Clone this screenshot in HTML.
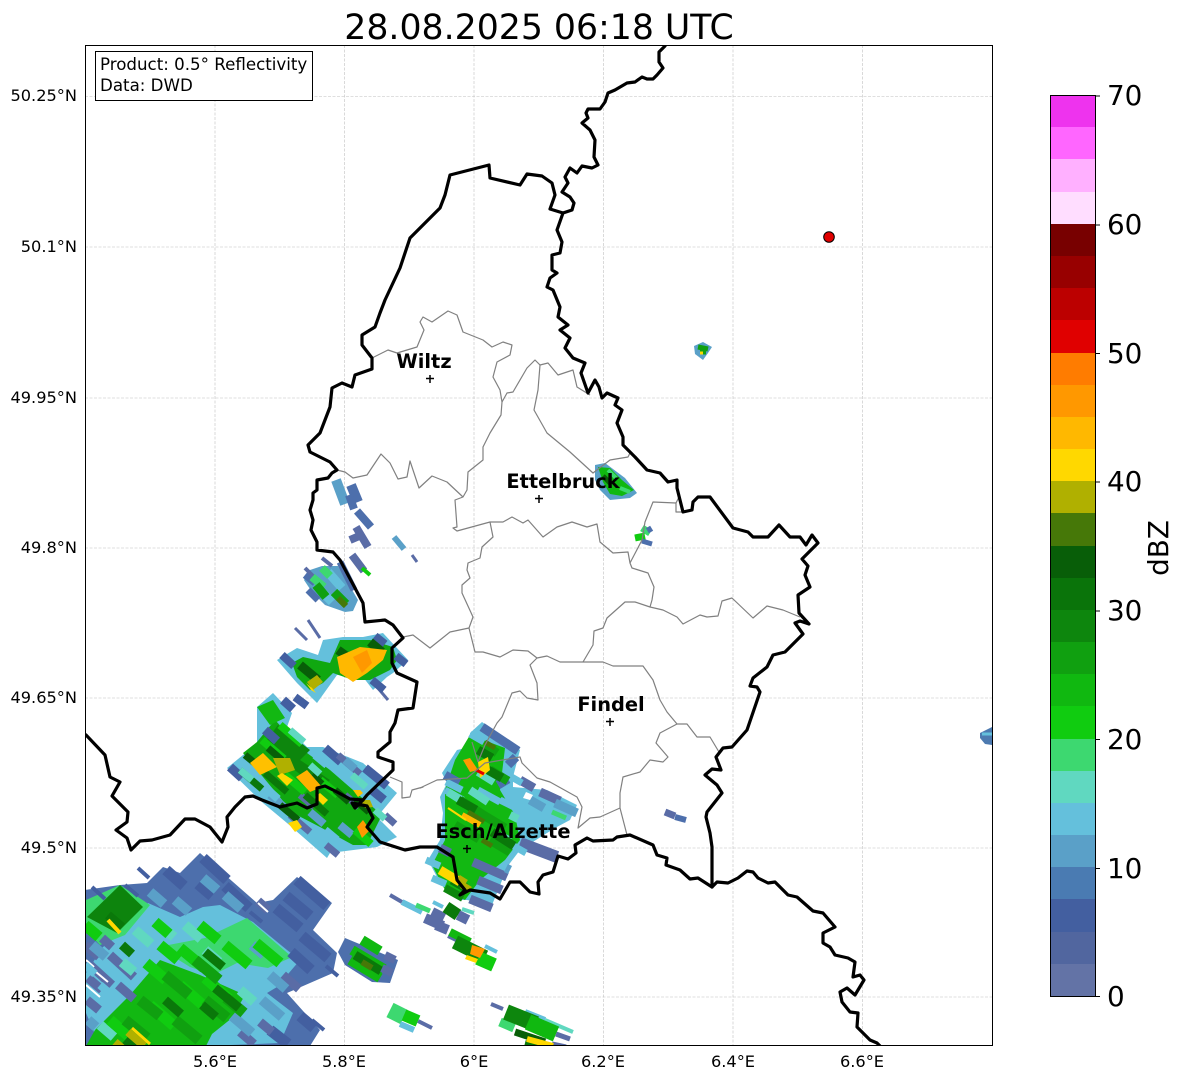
<!DOCTYPE html>
<html><head><meta charset="utf-8"><title>Radar</title>
<style>
html,body{margin:0;padding:0;background:#fff}
svg{display:block;font-family:"DejaVu Sans",sans-serif}
.g{stroke:#c0c0c0;stroke-width:.6;stroke-dasharray:3 1.5;fill:none}
.k{fill:none;stroke:#000;stroke-width:3.2;stroke-linejoin:round;stroke-linecap:round}
.y{fill:none;stroke:#808080;stroke-width:1.2;stroke-linejoin:round}
.r path{fill:none;stroke-linecap:butt}
.lat{font-size:16.2px;text-anchor:end}
.lon{font-size:16.2px;text-anchor:middle}
.cb{font-size:27.8px}
.c{font-size:19.4px;font-weight:bold;text-anchor:middle}
</style></head><body>
<svg width="1184" height="1081" viewBox="0 0 1184 1081" xmlns="http://www.w3.org/2000/svg">
<defs><clipPath id="ax"><rect x="85.5" y="45.5" width="907" height="1000"/></clipPath></defs>
<rect width="1184" height="1081" fill="#fff"/>
<text x="539" y="39" font-size="34.7" text-anchor="middle">28.08.2025 06:18 UTC</text>

<path class="g" d="M215 45V1046M344.500 45V1046M474 45V1046M603.500 45V1046M733 45V1046M862.500 45V1046M85 96.500H992M85 247H992M85 398H992M85 548H992M85 698H992M85 848H992M85 997H992"/>

<g clip-path="url(#ax)">
<g class="r">
<!-- Blob A: SW -->
<polygon fill="#4d6fac" points="85,890 120,885 147,883 163,867 180,873 200,853 257,903 273,900 297,877 332,903 313,930 337,953 333,973 287,993 320,1030 310,1046 85,1046"/>
<polygon fill="#64c0dc" points="125,930 148,903 180,917 203,907 220,905 253,922 287,950 300,960 277,987 267,993 293,1013 280,1043 207,1046 100,1046 86,1013 86,973 103,947"/>
<polygon fill="#3dd870" points="205,938 247,918 292,957 268,968 237,963 213,975 190,967 158,947"/>
<polygon fill="#12b812" points="95,1030 130,995 160,960 200,975 245,995 232,1018 212,1034 206,1046 86,1046"/>
<polygon fill="#3dd870" points="86,900 120,885 150,905 125,935 100,945 86,930"/>
<polygon fill="#0d840d" points="87,917 120,885 143,907 117,933"/>
<path stroke="#435fa0" stroke-width="11" d="M166 870l18 16M203 858l24 22M225 886l24 22M297 880l30 26M286 896l24 20M276 908l24 20M302 936l26 22M291 952l20 18M198 884l14 12M300 1016l14 12M270 1030l18 14"/>
<path stroke="#5a6ca6" stroke-width="9" d="M110 955l24 22M90 965l22 20M118 985l16 14M87 1000l12 10M260 1022l12 10M240 1032l14 12M283 975l16 14M258 901l10 9M88 978l14 12M85 945l14 12M102 938l10 9"/>
<path stroke="#5aa0c8" stroke-width="10" d="M203 878l14 12M175 900l14 12M252 945l12 10M270 975l16 14M262 1000l20 17M232 1016l20 17M92 945l14 12M88 1020l8 7M225 895l16 14M150 892l14 12"/>
<path stroke="#435fa0" stroke-width="4" d="M138 868l11 10M125 885l13 11M92 887l13 12M326 966l12 10M312 1020l12 10M250 912l12 10"/>
<path stroke="#fff" stroke-width="2" d="M86 985l14 12M96 972l12 10M86 960l8 7M258 903l10 9"/>
<path stroke="#60d8c0" stroke-width="10" d="M135 930l16 14M185 925l16 14M100 1025l14 12M240 990l14 12M205 950l14 12M160 925l14 12M122 962l12 10"/>
<path stroke="#10cc10" stroke-width="11" d="M225 945l24 20M256 943l24 20M180 948l24 20M155 922l14 12M85 925l14 12M146 963l20 17M180 985l24 21M205 978l24 21M150 1005l24 21M110 1020l24 21M160 945l18 15M200 925l18 15"/>
<path stroke="#10a010" stroke-width="11" d="M165 975l24 20M195 960l24 20M205 1000l22 18M175 1020l24 20M125 1020l22 18M226 998l18 15M140 1000l20 16"/>
<path stroke="#0a780a" stroke-width="9" d="M205 952l18 15M215 988l24 20M125 1040l16 14M165 1000l16 14M122 945l10 9M108 915l14 12M202 1005l14 12"/>
<path stroke="#ffd800" stroke-width="4" d="M108 920l12 13"/>
<path stroke="#b0b000" stroke-width="8" d="M128 1032l16 14M115 1042l8 7"/>
<path stroke="#ffd800" stroke-width="3" d="M132 1028l18 16"/>
<path stroke="#64c0dc" stroke-width="8" d="M85 965l10 9M100 985l14 12"/>
<!-- Q -->
<polygon fill="#4d6fac" points="338,952 345,938 398,960 390,983 372,982 345,965"/>
<path stroke="#10b810" stroke-width="10" d="M352 950l32 19M350 960l30 18M362 940l18 11"/>
<path stroke="#0a780a" stroke-width="9" d="M355 955l26 16"/>
<path stroke="#467808" stroke-width="6" d="M362 962l10 6"/>
<path stroke="#5a6ca6" stroke-width="8" d="M385 955l10 5M382 968l10 5"/>
<!-- B -->
<polygon fill="#64c0dc" points="227,768 243,755 257,745 257,707 273,693 292,713 287,727 307,747 323,747 363,763 397,793 377,817 397,837 377,847 330,853 327,858 287,823 263,803"/>
<polygon fill="#10a810" points="243,753 257,742 275,720 303,750 330,770 353,790 382,815 367,845 353,845 320,827 293,813 263,777"/>
<polygon fill="#12b812" points="257,707 273,700 285,718 270,725"/>
<polygon fill="#0d860d" points="263,745 278,725 310,750 300,760 330,780 320,790"/>
<path stroke="#435fa0" stroke-width="9" d="M230 767l12 11M325 748l16 14M365 768l22 18M372 790l12 10M283 700l10 9M265 730l12 11"/>
<path stroke="#5a6ca6" stroke-width="7" d="M338 755l22 19M300 795l14 12M345 795l14 12M290 815l20 17M326 845l12 10M385 815l10 9"/>
<path stroke="#5aa0c8" stroke-width="8" d="M310 812l14 12M340 825l12 10M270 795l14 12M345 760l10 9"/>
<path stroke="#64c0dc" stroke-width="8" d="M315 755l12 10M268 790l10 9M325 830l12 10"/>
<path stroke="#10cc10" stroke-width="8" d="M280 725l22 19M262 740l22 19M320 780l18 15M355 830l16 14M285 775l20 17"/>
<path stroke="#085e08" stroke-width="7" d="M245 755l12 10M268 748l14 12M280 805l18 15M335 790l14 12M355 800l14 12M312 775l10 9"/>
<path stroke="#0a780a" stroke-width="7" d="M265 773l22 19M240 770l22 19M305 795l22 19"/>
<path stroke="#60d8c0" stroke-width="7" d="M240 770l12 10M290 730l14 12M310 765l10 9M352 775l14 12M375 810l10 9"/>
<polygon fill="#ffc000" points="250,763 263,753 277,767 260,775"/>
<polygon fill="#b0b000" points="273,758 290,758 295,770 280,775"/>
<polygon fill="#ffd800" points="282,773 293,780 287,786 277,776"/>
<polygon fill="#ffb000" points="296,777 307,770 322,787 310,792"/>
<polygon fill="#ffd800" points="320,793 328,800 323,805 315,797"/>
<polygon fill="#ffd800" points="288,823 297,820 302,827 295,832"/>
<polygon fill="#ff9800" points="357,827 363,820 370,830 362,838"/>
<polygon fill="#ffc000" points="353,790 360,790 363,793 358,797"/>
<polygon fill="#b0b000" points="360,800 370,800 373,807 365,808"/>
<!-- D -->
<polygon fill="#5aa0c8" points="304,580 310,570 322,566 338,566 358,600 353,611 345,612 325,605 312,592"/>
<path stroke="#4d6fac" stroke-width="7" d="M305 575l10 8M340 562l14 28M308 590l10 10"/>
<path stroke="#64c0dc" stroke-width="9" d="M328 572l14 16M320 590l12 12"/>
<path stroke="#3dd870" stroke-width="8" d="M312 577l12 10M322 568l8 8"/>
<path stroke="#10a010" stroke-width="9" d="M316 585l10 12M334 592l12 12"/>
<path stroke="#467808" stroke-width="6" d="M338 598l8 8"/>
<path stroke="#5a6ca6" stroke-width="4" d="M322 558l10 8M305 568l8 8"/>
<!-- C -->
<path stroke="#5a6ca6" stroke-width="3" d="M308 620l12 18M295 628l12 12M377 687l11 13"/>
<polygon fill="#64c0dc" points="277,660 297,648 318,655 323,640 343,637 363,637 383,633 408,660 393,673 387,677 373,690 363,677 337,675 317,703 297,683"/>
<polygon fill="#10a810" points="292,663 303,657 330,663 340,640 370,640 393,647 397,660 390,670 370,680 353,680 333,673 323,683 310,690 297,677"/>
<path stroke="#435fa0" stroke-width="8" d="M282 655l12 11M372 680l12 10M396 656l10 8M375 636l10 8M295 697l12 9"/>
<path stroke="#085e08" stroke-width="9" d="M300 665l18 15M338 650l14 10M370 642l12 10"/>
<polygon fill="#ffb800" points="337,657 360,647 387,650 383,660 367,673 353,682 340,673"/>
<polygon fill="#ff9800" points="353,657 367,650 372,663 362,673"/>
<polygon fill="#b0b000" points="307,682 317,675 323,682 313,690"/>
<polygon fill="#ffd800" points="306,683 312,688 316,693 311,690"/>
<!-- E -->
<path stroke="#5aa0c8" stroke-width="10" d="M336 480l9 24"/>
<path stroke="#4d6fac" stroke-width="10" d="M351 485l7 17"/>
<path stroke="#4d6fac" stroke-width="8" d="M357 511l14 16M349 495l5 14"/>
<path stroke="#5a6ca6" stroke-width="8" d="M356 527l12 20M352 555l12 16M350 540l14 -6"/>
<path stroke="#10cc10" stroke-width="4" d="M362 568l8 7"/>
<path stroke="#5aa0c8" stroke-width="6" d="M394 537l10 12"/>
<path stroke="#5a6ca6" stroke-width="3" d="M412 555l5 7"/>
<!-- F -->
<polygon fill="#5aa0c8" points="595,465 605,463 625,478 637,493 630,498 610,500 600,490 595,480"/>
<polygon fill="#10b810" points="598,467 610,468 622,480 634,490 622,496 610,494 603,482"/>
<path stroke="#3dd870" stroke-width="4" d="M608 470l8 8M620 488l10 4"/>
<path stroke="#085e08" stroke-width="5" d="M603 476l8 8"/>
<!-- G -->
<path stroke="#3dd870" stroke-width="7" d="M642 528l8 5"/>
<path stroke="#10cc10" stroke-width="7" d="M635 538l10 -2"/>
<path stroke="#4d6fac" stroke-width="5" d="M642 541l10 3M648 527l3 5"/>
<!-- H -->
<polygon fill="#5aa0c8" points="694,346 703,342 712,347 708,353 703,360 695,354"/>
<path stroke="#10a010" stroke-width="5" d="M698 347l10 2M700 352l6 0"/>
<path stroke="#ffd800" stroke-width="3" d="M700 353l3 0"/>
<!-- I -->
<polygon fill="#4d7ab0" points="980,733 992,727 992,745 985,744 980,738"/>
<path stroke="#64c0dc" stroke-width="3" d="M982 734l10 0"/>
<!-- J -->
<path stroke="#5a6ca6" stroke-width="7" d="M665 812l10 4"/>
<path stroke="#4d6fac" stroke-width="6" d="M675 817l11 3"/>
<!-- K Esch -->
<polygon fill="#64c0dc" points="470,733 482,722 520,750 513,777 513,787 547,790 577,805 570,820 555,828 520,850 507,867 503,878 492,905 467,900 460,900 437,877 428,860 440,840 443,813 440,797 447,783 442,773 457,750 470,747"/>
<polygon fill="#12b812" points="470,735 505,748 500,790 515,815 520,840 505,860 480,880 465,900 445,890 432,865 445,840 445,790 455,760"/>
<path stroke="#4d6fac" stroke-width="9" d="M482 727l36 24M508 765l8 -8M445 775l14 8M498 785l10 -6"/>
<path stroke="#5a6ca6" stroke-width="12" d="M520 843l37 14"/>
<path stroke="#5a6ca6" stroke-width="9" d="M473 862l34 15M478 880l24 10M470 899l22 9M440 848l10 5M540 792l20 9M520 780l14 8"/>
<path stroke="#5aa0c8" stroke-width="9" d="M530 800l14 8M555 803l22 10M506 868l4 2"/>
<path stroke="#64c0dc" stroke-width="7" d="M470 734l14 8M446 782l16 8M445 790l18 10M508 775l14 8M478 790l22 12M500 800l16 8M512 845l14 8M426 860l14 6M432 878l14 6"/>
<path stroke="#60d8c0" stroke-width="8" d="M448 792l16 10M478 772l16 10M510 815l8 4M470 790l18 12M500 835l10 6"/>
<path stroke="#10a010" stroke-width="9" d="M485 745l12 8M490 770l18 11M460 800l22 14M475 810l30 18M455 825l24 14M490 840l20 12"/>
<path stroke="#0a780a" stroke-width="9" d="M478 750l14 8M488 770l14 8M492 832l22 14M458 800l18 10M452 880l14 8"/>
<path stroke="#467808" stroke-width="5" d="M485 742l10 6M468 812l16 10M482 840l10 6"/>
<polygon fill="#ff9800" points="463,760 470,758 478,770 470,772"/>
<polygon fill="#ffd800" points="478,762 488,757 490,770 480,778"/>
<path stroke="#e00000" stroke-width="3" d="M476 770l8 4"/>
<path stroke="#ffb800" stroke-width="6" d="M462 815l18 10"/>
<path stroke="#ffd800" stroke-width="2" d="M448 808l18 12"/>
<path stroke="#ffd800" stroke-width="9" d="M440 870l20 12"/>
<path stroke="#b0b000" stroke-width="7" d="M458 878l8 5M462 885l8 5"/>
<path stroke="#0d860d" stroke-width="8" d="M445 888l18 10"/>
<path stroke="#64c0dc" stroke-width="8" d="M530 812l22 12"/>
<path stroke="#3dd870" stroke-width="5" d="M552 812l14 6"/>
<polygon fill="#fff" points="526,792 533,795 530,800 523,798"/>
<!-- L -->
<path stroke="#5a6ca6" stroke-width="4" d="M390 895l12 7"/>
<path stroke="#64c0dc" stroke-width="6" d="M402 902l20 10"/>
<path stroke="#3dd870" stroke-width="5" d="M416 905l14 6"/>
<path stroke="#5a6ca6" stroke-width="10" d="M425 918l18 8M436 925l12 5M432 912l12 6"/>
<path stroke="#5a6ca6" stroke-width="4" d="M448 936l10 5"/>
<!-- N -->
<path stroke="#64c0dc" stroke-width="4" d="M433 902l10 5"/>
<path stroke="#0a780a" stroke-width="12" d="M446 907l12 8"/>
<path stroke="#60d8c0" stroke-width="4" d="M462 909l12 4"/>
<path stroke="#5a6ca6" stroke-width="10" d="M458 915l10 5"/>
<!-- M -->
<path stroke="#10b810" stroke-width="8" d="M450 932l20 10"/>
<path stroke="#0d860d" stroke-width="14" d="M455 942l30 15"/>
<path stroke="#10cc10" stroke-width="14" d="M478 958l16 7"/>
<path stroke="#64c0dc" stroke-width="4" d="M485 946l12 6"/>
<polygon fill="#ff9800" points="472,945 485,949 480,958 470,954"/>
<polygon fill="#ffd800" points="467,955 478,959 476,963 465,959"/>
<!-- O -->
<path stroke="#3dd870" stroke-width="16" d="M390 1010l14 7"/>
<path stroke="#10cc10" stroke-width="12" d="M404 1015l14 6"/>
<path stroke="#64c0dc" stroke-width="6" d="M400 1024l14 6"/>
<path stroke="#5a6ca6" stroke-width="4" d="M418 1021l14 7"/>
<!-- P -->
<path stroke="#5a6ca6" stroke-width="4" d="M491 1004l12 5"/>
<path stroke="#64c0dc" stroke-width="6" d="M525 1012l20 8"/>
<path stroke="#60d8c0" stroke-width="4" d="M545 1020l28 12"/>
<path stroke="#3dd870" stroke-width="9" d="M500 1022l14 6"/>
<path stroke="#0d860d" stroke-width="16" d="M506 1012l30 12"/>
<path stroke="#10b810" stroke-width="16" d="M528 1022l28 12"/>
<path stroke="#085e08" stroke-width="7" d="M515 1032l30 10"/>
<path stroke="#5a6ca6" stroke-width="5" d="M556 1034l14 5M552 1044l14 3"/>
<path stroke="#0a780a" stroke-width="6" d="M525 1043l20 5"/>
<path stroke="#ffd800" stroke-width="6" d="M527 1039l26 7"/>
</g>

<!-- Grey borders -->
<path class="y" d="M372 358L388 350 397 353 417 347 424 330 420 322 423 317 432 322 448 311 457 315 463 332 483 340 492 347 503 342 512 345 510 355 497 362 493 377 500 390 502 402 501 415 490 433 483 447 483 460 468 472 467 490 463 497 455 500 457 527 453 528 457 531 490 522 503 522 512 517 523 523 528 520 543 537 557 527 572 522 587 527 597 524 600 542 613 553 628 552 630 563"/>
<path class="y" d="M502 402L507 393 513 392 527 368 535 360 540 365 548 363 558 375 573 370 577 387 590 395"/>
<path class="y" d="M540 365L538 390 534 410 547 433 570 452 593 473 610 460 628 457 630 453"/>
<path class="y" d="M337 470L345 472 353 478 367 475 381 454 390 463 398 479 407 477 410 461 413 470 419 488 432 476 447 482 463 497"/>
<path class="y" d="M490 522L493 537 482 547 480 558 468 563 467 570 470 578 462 585 462 593 473 617 469 628 475 652 483 652 500 657 513 650 528 651 537 658 547 656 560 662 582 662 603 662 613 666 643 666 653 680 660 700 667 712 677 724 687 724 697 737 710 737 719 752"/>
<path class="y" d="M403 637L413 635 430 648 440 640 450 632 469 628"/>
<path class="y" d="M583 662L593 645 594 631 603 628 607 618 625 602 635 602 650 607 663 610 677 617 683 624 700 615 707 617 718 616 722 601 732 598 753 618 767 606 783 610 800 617"/>
<path class="y" d="M650 607L652 600 654 587 648 573 632 568 630 563 642 540 645 522 653 502 676 503 676 512 683 512M676 503L679 497"/>
<path class="y" d="M677 724L660 733 656 743 668 757 663 762 650 760 640 772 623 777 620 793 620 808 627 835M620 808L600 817 590 818 578 828 582 807 577 797 550 782 537 778 522 763 520 757 485 763 467 778 437 780 420 788 423 787 412 790 410 797 402 798 402 782 390 777"/>
<path class="y" d="M537 658L530 665 537 683 538 700 527 698 520 691 512 693 502 717 497 723 485 745 478 762M472 742L478 762"/>

<!-- Black borders -->
<path class="k" d="M665 46L659 52 659 62 663 68 657 75 653 79 647 79 642 77 635 82 627 83 615 90 608 93 605 102 600 109 588 109 586 113 588 118 582 123 590 130 595 140 594 157 598 165 592 168 582 166 577 173 570 168 565 177 568 183 562 192 570 197 574 203 572 210 563 213 557 230 562 242 560 253 552 255 552 270 557 273 550 278 547 287 553 290 560 307 558 317 568 325 560 330 570 338 565 348 573 358 585 363 581 373 588 393 595 380 599 387 602 398 607 393 618 398 615 405 622 410 617 423 623 437 623 445 635 457 647 470 660 473 668 482 677 480 677 488 683 512 692 510 693 502 698 497 710 497 733 528 748 532 753 537 758 537 768 537 779 525 790 537 800 537 806 545 812 535 818 543 802 559 808 566 805 575 810 587 798 595 799 613 809 624 800 621 795 623 803 634 785 652 773 655 767 667 753 678 750 686 757 687 760 692 747 730 732 747 723 748 716 757 721 770 712 769 705 775 717 785 722 793 707 812 706 817 710 833 712 847 712 887 698 878 690 879 680 870 666 865 667 858 657 855 653 845 630 835 617 837 613 840 593 841 587 838 575 845 576 853 568 859 558 856 553 872 543 875 538 882 539 894 530 892 520 882 510 882 500 899 490 893 470 890 460 895 465 890 457 880 453 857 437 847 420 847 405 850 380 842 367 827 373 818 367 806 352 803 355 808 363 800 367 795 393 770 393 762 378 757 378 752 390 742 390 732 395 723 398 710 413 708 417 682 397 673 392 663 392 648 403 638 393 625 385 620 365 622 363 603 340 560 333 552 317 550 317 542 311 530 313 520 310 510 313 500 313 493 317 490 317 480 328 478 332 473 337 470 330 462 310 452 308 445 320 433 330 407 332 388 342 383 352 387 355 375 372 369 372 358 362 345 362 335 375 327 380 313 385 300 400 268 410 238 440 208 445 195 450 175 489 165 490 178 520 185 527 174 542 176 552 183 555 195 550 209 563 213"/>
<path class="k" d="M86 735L105 755 110 777 120 782 112 796 128 812 127 822 116 830 127 838 131 850 140 841 152 840 170 835 185 819 195 819 210 827 222 842 228 827 227 817 235 807 245 797 253 796 262 800 280 807 297 803 307 808 317 804 317 788 325 786 337 792 350 799 363 800"/>
<path class="k" d="M712 887L717 882 728 883 738 878 747 871 753 872 758 878 768 883 775 882 788 895 797 897 813 911 823 913 835 927 823 933 823 943 830 947 835 955 848 958 855 962 853 977 860 975 864 980 855 995 847 988 840 992 842 1002 850 1012 858 1013 857 1027 870 1040 877 1043 881 1047"/>
</g>

<!-- Axes frame -->
<rect x="85.500" y="45.500" width="907" height="1000" fill="none" stroke="#000" stroke-width="1"/>
<rect x="95.500" y="51.500" width="217" height="49" fill="#fff" stroke="#000" stroke-width="1"/>
<text x="100" y="70" font-size="16.67">Product: 0.5° Reflectivity</text>
<text x="100" y="91" font-size="16.67">Data: DWD</text>

<!-- red dot -->
<circle cx="829" cy="237" r="5.300" fill="#e00000" stroke="#000" stroke-width="1"/>

<!-- cities -->
<text class="c" x="424" y="368">Wiltz</text>
<text class="c" x="563" y="488">Ettelbruck</text>
<text class="c" x="611" y="711">Findel</text>
<text class="c" x="503" y="838">Esch/Alzette</text>
<path stroke="#000" stroke-width="1.500" fill="none" d="M426 378.500h8M430 375v8M535 498.500h8M539 495v8M606 721.500h8M610 718v8M463 848.500h8M467 845v8"/>

<!-- axis ticks -->
<g class="lat">
<text x="77" y="101">50.25°N</text>
<text x="77" y="252">50.1°N</text>
<text x="77" y="403">49.95°N</text>
<text x="77" y="553">49.8°N</text>
<text x="77" y="703">49.65°N</text>
<text x="77" y="853">49.5°N</text>
<text x="77" y="1002">49.35°N</text>
</g>
<g class="lon">
<text x="215" y="1067">5.6°E</text>
<text x="344" y="1067">5.8°E</text>
<text x="474" y="1067">6°E</text>
<text x="603" y="1067">6.2°E</text>
<text x="733" y="1067">6.4°E</text>
<text x="862" y="1067">6.6°E</text>
</g>

<!-- colorbar -->
<g shape-rendering="crispEdges">
<rect x="1051" y="95" width="45" height="32.500" fill="#ee33ee"/>
<rect x="1051" y="127" width="45" height="32.500" fill="#ff66ff"/>
<rect x="1051" y="159" width="45" height="33" fill="#ffb0ff"/>
<rect x="1051" y="192" width="45" height="32" fill="#ffddff"/>
<rect x="1051" y="224" width="45" height="32" fill="#780000"/>
<rect x="1051" y="256" width="45" height="32" fill="#980000"/>
<rect x="1051" y="288" width="45" height="32" fill="#bc0000"/>
<rect x="1051" y="320" width="45" height="33" fill="#e00000"/>
<rect x="1051" y="353" width="45" height="32" fill="#ff7c00"/>
<rect x="1051" y="385" width="45" height="32" fill="#ff9800"/>
<rect x="1051" y="417" width="45" height="32" fill="#ffb800"/>
<rect x="1051" y="449" width="45" height="32" fill="#ffd800"/>
<rect x="1051" y="481" width="45" height="32" fill="#b0b000"/>
<rect x="1051" y="513" width="45" height="33" fill="#467808"/>
<rect x="1051" y="546" width="45" height="32" fill="#085e08"/>
<rect x="1051" y="578" width="45" height="32" fill="#0a740a"/>
<rect x="1051" y="610" width="45" height="32" fill="#0d860d"/>
<rect x="1051" y="642" width="45" height="32" fill="#10a010"/>
<rect x="1051" y="674" width="45" height="32" fill="#10b810"/>
<rect x="1051" y="706" width="45" height="33" fill="#10cc10"/>
<rect x="1051" y="739" width="45" height="32" fill="#3dd870"/>
<rect x="1051" y="771" width="45" height="32" fill="#60d8c0"/>
<rect x="1051" y="803" width="45" height="32" fill="#64c0dc"/>
<rect x="1051" y="835" width="45" height="32" fill="#5aa0c8"/>
<rect x="1051" y="867" width="45" height="32" fill="#4a7bb2"/>
<rect x="1051" y="899" width="45" height="33" fill="#435fa0"/>
<rect x="1051" y="932" width="45" height="32" fill="#51669f"/>
<rect x="1051" y="964" width="45" height="32" fill="#6373a6"/>
</g>
<rect x="1050.500" y="95.500" width="45" height="901" fill="none" stroke="#000" stroke-width="1"/>
<path stroke="#000" stroke-width="1" d="M1095 96h5M1095 225h5M1095 353.500h5M1095 482h5M1095 611h5M1095 739.500h5M1095 868.500h5M1095 996.500h5"/>
<g class="cb">
<text x="1107" y="105">70</text>
<text x="1107" y="234">60</text>
<text x="1107" y="363">50</text>
<text x="1107" y="491">40</text>
<text x="1107" y="620">30</text>
<text x="1107" y="749">20</text>
<text x="1107" y="878">10</text>
<text x="1107" y="1006">0</text>
</g>
<text transform="translate(1168 548) rotate(-90)" font-size="27.8" text-anchor="middle">dBZ</text>
</svg>
</body></html>
